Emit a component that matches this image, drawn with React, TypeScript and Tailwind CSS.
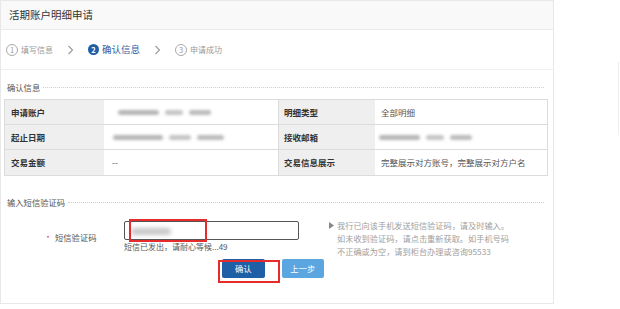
import React from "react";

const font = { fontFamily: '"Noto Sans CJK SC", "Noto Sans", sans-serif' };

function Circle({ n, active }: { n: number; active?: boolean }) {
  return (
    <span
      className={
        active
          ? "flex h-[11px] w-[11px] items-center justify-center rounded-full bg-[#1f5fa6] text-[7.5px] font-bold leading-none text-white"
          : "flex h-[12px] w-[12px] items-center justify-center rounded-full border border-[#aaa] text-[7.5px] leading-none text-[#999]"
      }
    >
      {n}
    </span>
  );
}

function Chevron() {
  return (
    <svg width="7" height="10" viewBox="0 0 7 10" className="mx-[14px]">
      <polyline points="1.5,1 5.5,5 1.5,9" fill="none" stroke="#999" strokeWidth="1.1" />
    </svg>
  );
}

function Blur({ w, dx = 0 }: { w: number; dx?: number }) {
  return (
    <div className="flex items-center gap-[6px]" style={{ marginLeft: dx }}>
      <div className="h-[5px] rounded-full bg-[#b5b5b5] blur-[1.5px]" style={{ width: w * 0.45 }} />
      <div className="h-[5px] rounded-full bg-[#c4c4c4] blur-[1.5px]" style={{ width: w * 0.2 }} />
      <div className="h-[5px] rounded-full bg-[#bbb] blur-[1.5px]" style={{ width: w * 0.25 }} />
    </div>
  );
}

function SectionTitle({ children }: { children: React.ReactNode }) {
  return (
    <div className="flex items-center pl-[6px] pr-[9px]">
      <span className="text-[8.3px] leading-none text-[#555]">{children}</span>
      <div className="ml-[3px] flex-1 border-t border-dotted border-[#cfcfcf]" />
    </div>
  );
}

export default function App() {
  return (
    <div className="flex h-[309px] w-[620px] bg-white" style={font}>
      <div className="flex h-[304px] w-[554px] flex-col border border-[#e8e8e8] bg-white">
        {/* Header */}
        <div className="flex h-[29px] items-center border-b border-[#ececec] bg-[#f9f9f9] pl-[8px]">
          <span className="text-[10.5px] text-[#333]">活期账户明细申请</span>
        </div>
        {/* Steps */}
        <div className="flex h-[40px] items-center border-b border-[#f0f0f0] pl-[5px]">
          <Circle n={1} />
          <span className="ml-[3px] text-[8px] text-[#999]">填写信息</span>
          <Chevron />
          <Circle n={2} active />
          <span className="ml-[3px] text-[9.5px] text-[#2561a8]">确认信息</span>
          <Chevron />
          <Circle n={3} />
          <span className="ml-[3px] text-[8px] text-[#999]">申请成功</span>
        </div>
        {/* Section 1 */}
        <div className="mt-[13px]">
          <SectionTitle>确认信息</SectionTitle>
        </div>
        <div className="mx-[3px] mt-[8px] w-[544px] border border-[#dcdcdc] text-[8.5px]">
          {[
            ["申请账户", <Blur w={90} dx={6} />, "明细类型", <span className="text-[#555]">全部明细</span>],
            ["起止日期", <Blur w={110} dx={1} />, "接收邮箱", <Blur w={90} dx={-2} />],
            ["交易金额", <span className="text-[#555]">--</span>, "交易信息展示", <span className="text-[#555]">完整展示对方账号，完整展示对方户名</span>],
          ].map((row, i) => (
            <div key={i} className={"flex h-[25px] " + (i < 2 ? "border-b border-[#dcdcdc]" : "")}>
              <div className="flex w-[99px] items-center bg-[#efefef] pl-[6px] font-bold text-[#333]">{row[0]}</div>
              <div className="flex w-[174px] items-center pl-[8px]">{row[1]}</div>
              <div className="flex w-[97px] items-center border-l border-[#dcdcdc] bg-[#efefef] pl-[5px] font-bold text-[#333]">{row[2]}</div>
              <div className="flex flex-1 items-center pl-[6px]">{row[3]}</div>
            </div>
          ))}
        </div>
        {/* Section 2 */}
        <div className="mt-[22px]">
          <SectionTitle>输入短信验证码</SectionTitle>
        </div>
        <div className="mt-[14px] flex">
          <div className="flex w-[123px] pt-[10px]">
            <span className="ml-[43px] text-[8px] text-[#e53935]">•</span>
            <span className="ml-[3px] text-[8.3px] text-[#555]">短信验证码</span>
          </div>
          <div className="flex w-[200px] flex-col">
            <div className="relative h-[19px] w-[175px] rounded-[2px] border border-[#555]">
              <div className="absolute left-[6px] top-[6px] h-[7px] w-[40px] rounded-full bg-[#c8c8c8] blur-[2px]" />
              <div className="absolute left-[4px] top-[-3px] h-[23px] w-[78px] border-2 border-[#e52b2b]" />
            </div>
            <span className="mt-[1px] text-[8px] leading-[11px] text-[#555]">短信已发出，请耐心等候...49</span>
            <div className="relative mt-[7px] flex gap-[17px] pl-[98px]">
              <button className="h-[19px] w-[46px] rounded-[2px] bg-[#1f5fa6] text-[8.3px] text-white">确认</button>
              <button className="h-[19px] w-[46px] rounded-[2px] bg-[#5ba6e0] text-[8.3px] text-white">上一步</button>
              <div className="absolute left-[94px] top-[1px] h-[23px] w-[62px] border-2 border-[#e52b2b]" />
            </div>
          </div>
          <div className="ml-[5px] mt-[-2px] flex">
            <svg width="5" height="7" viewBox="0 0 5 7" className="mt-[3px]">
              <polygon points="0,0 5,3.5 0,7" fill="#888" />
            </svg>
            <p className="ml-[3px] w-[175px] text-[8.2px] leading-[13px] text-[#a0a0a0]">
              我行已向该手机发送短信验证码，请及时输入。如未收到验证码，请点击重新获取。如手机号码不正确或为空，请到柜台办理或咨询95533
            </p>
          </div>
        </div>
      </div>
      <div className="flex-1 pt-[62px]">
        <div className="ml-[64px] h-[73px] w-px bg-[#eee]" />
      </div>
    </div>
  );
}
